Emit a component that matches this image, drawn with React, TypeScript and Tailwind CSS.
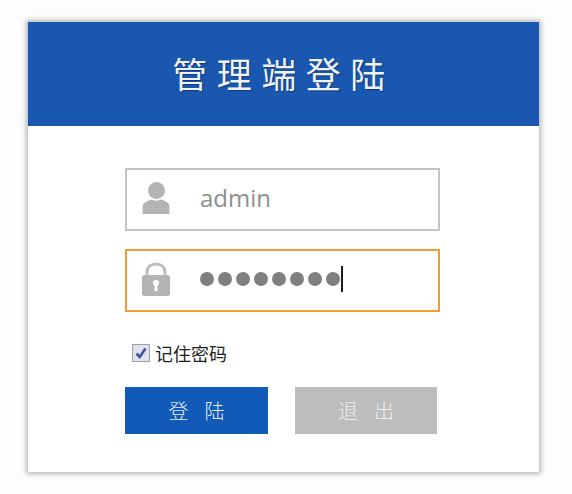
const cjk = "font-['Noto_Sans_CJK_SC','Noto_Sans',sans-serif]";

function UserIcon() {
  return (
    <svg width="30" height="36" viewBox="0 0 30 36" className="shrink-0">
      <circle cx="15.5" cy="10.5" r="8.5" fill="#b4b4b4" />
      <path d="M1.5 34 V27 C1.5 23 6 21 11 19.5 C13 21 18 21 20 19.5 C25 21 28.5 23 28.5 27 V34 Z" fill="#b4b4b4" />
    </svg>
  );
}

function LockIcon() {
  return (
    <svg width="30" height="36" viewBox="0 0 30 36" className="shrink-0">
      <path d="M6 15 V11.5 C6 6 10 3 15 3 C20 3 24 6 24 11.5 V15" fill="none" stroke="#bcbcbc" strokeWidth="3" />
      <rect x="1" y="14" width="28" height="21" rx="2.5" fill="#b4b4b4" />
      <circle cx="15" cy="22" r="3" fill="#fff" />
      <path d="M13.8 23 H16.2 L16.8 30 H13.2 Z" fill="#fff" />
    </svg>
  );
}

export default function App() {
  return (
    <div className="min-h-[494px] w-[572px] bg-[#fdfdfd] pl-[28px] pr-[33px] pt-[22px]">
      <div className="h-[450px] w-[511px] bg-white shadow-[0_0_5px_2px_rgba(0,0,0,0.28)]">
        <div className="flex h-[104px] items-center justify-center bg-[#1a57b0] pb-[4px]">
          <h1 className={`${cjk} text-[35px] font-normal leading-none tracking-[9.5px] text-[#eef2f8] [text-shadow:1px_1px_1px_rgba(0,0,0,0.35)]`}>
            管理端登陆
          </h1>
        </div>

        <div className="pl-[97px] pt-[42px]">
          <div className="flex h-[63px] w-[315px] items-center border-2 border-[#c4c4c4] pb-[4px] pl-[14px]">
            <UserIcon />
            <span className="ml-[29px] font-['Open_Sans',sans-serif] text-[24px] leading-none text-[#8e8e8e]">admin</span>
          </div>

          <div className="mt-[18px] flex h-[63px] w-[315px] items-center border-2 border-[#f29a33] pb-[4px] pl-[14px]">
            <LockIcon />
            <div className="ml-[29px] flex items-center gap-[4px]">
              {[0, 1, 2, 3, 4, 5, 6, 7].map((i) => (
                <span key={i} className="h-[14px] w-[14px] rounded-full bg-[#808080]" />
              ))}
            </div>
            <span className="ml-[1px] h-[26px] w-[2px] bg-[#1c1c1c]" />
          </div>

          <label className="ml-[7px] mt-[32px] flex items-center">
            <span className="flex h-[18px] w-[18px] items-center justify-center border border-[#a0a0a0] bg-[#dfe3ee]">
              <svg width="14" height="14" viewBox="0 0 14 14">
                <path d="M2.5 7.5 L5.7 11 L11.5 2.5" fill="none" stroke="#3f50a8" strokeWidth="2.6" />
              </svg>
            </span>
            <span className={`${cjk} ml-[5px] text-[18px] leading-none text-[#1f1f1f]`}>记住密码</span>
          </label>

          <div className="mt-[25px] flex gap-[27px]">
            <button className={`${cjk} h-[47px] w-[143px] bg-[#125ab8] pl-[16px] text-[20px] font-light tracking-[16px] text-[#e6eefa]`}>
              登陆
            </button>
            <button className={`${cjk} h-[47px] w-[142px] bg-[#bdbdbd] pl-[16px] text-[20px] font-light tracking-[16px] text-[#ececec]`}>
              退出
            </button>
          </div>
        </div>
      </div>
    </div>
  );
}
